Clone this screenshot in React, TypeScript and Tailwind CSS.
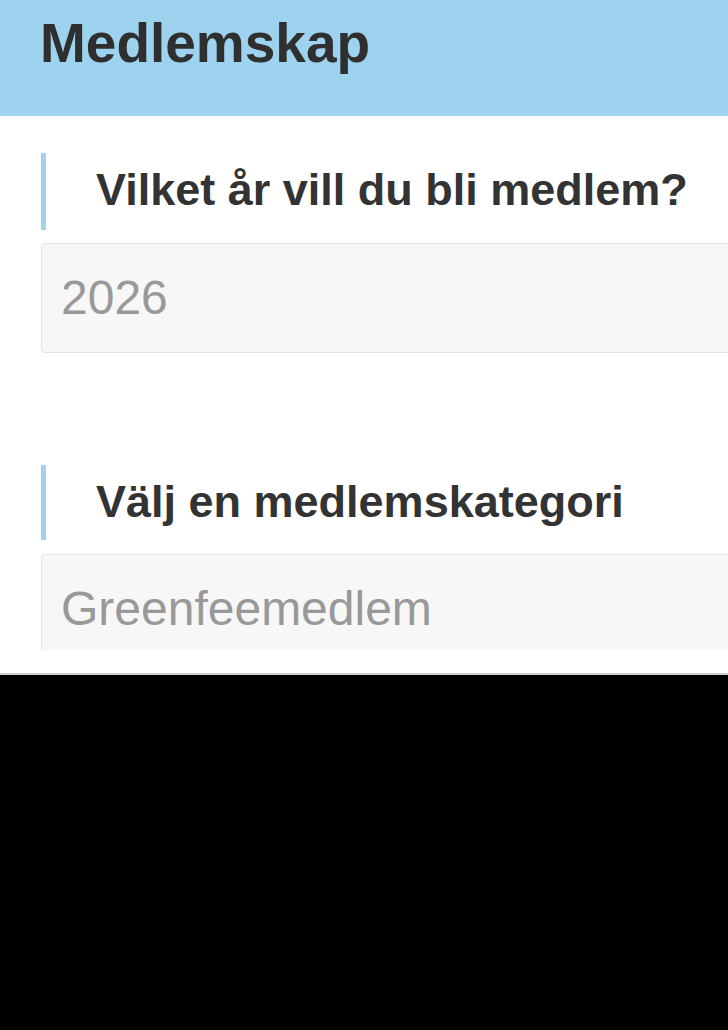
export default function App() {
    return (
        <div className="min-h-[1030px] w-[728px] overflow-hidden bg-black font-['Liberation_Sans',Arial,sans-serif]">
            {/* Header */}
            <div className="h-[116px] bg-[#9dd3ef] pl-[40px] pt-[16px]">
                <h1 className="text-[55px] font-bold leading-none text-[#2f2f2f]">Medlemskap</h1>
            </div>

            {/* Form area */}
            <div className="h-[559px] bg-white border-b-2 border-[#cfcfcf]">
                <div className="h-[534px] overflow-hidden pl-[41px] pt-[37px]">
                    <div className="border-l-[5px] border-[#9dd3ef] pl-[50px] pt-[14px] pb-[18px]">
                        <h2 className="text-[45px] font-bold leading-none text-[#333333] whitespace-nowrap">
                            Vilket år vill du bli medlem?
                        </h2>
                    </div>
                    <div className="mt-[13px] w-[760px] rounded-[4px] border border-[#e3e3e3] bg-[#f7f7f7] pl-[19px] py-[30px]">
                        <span className="block text-[48px] leading-none text-[#999999]">2026</span>
                    </div>

                    <div className="mt-[112px] border-l-[5px] border-[#9dd3ef] pl-[50px] pt-[14px] pb-[16px]">
                        <h2 className="text-[45px] font-bold leading-none text-[#333333] whitespace-nowrap">
                            Välj en medlemskategori
                        </h2>
                    </div>
                    <div className="mt-[14px] w-[760px] rounded-[4px] border border-[#e3e3e3] bg-[#f7f7f7] pl-[19px] py-[30px]">
                        <span className="block text-[48px] leading-none text-[#999999]">Greenfeemedlem</span>
                    </div>
                </div>
            </div>
        </div>
    );
}
